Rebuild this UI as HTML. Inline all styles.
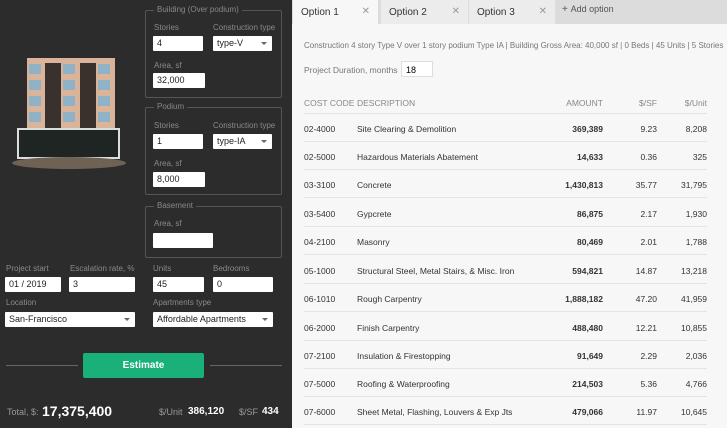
<!DOCTYPE html><html><head><style>
*{box-sizing:border-box;margin:0;padding:0}
body{width:727px;height:428px;overflow:hidden;font-family:"Liberation Sans",sans-serif;position:relative;background:#f7f7f7}
.a{position:absolute}
#L{left:0;top:0;width:292px;height:428px;background:#2c2c2c}
.lb{position:absolute;color:#8a8a8a;font-size:8px}
.in{position:absolute;background:#fff;height:15px;font-size:9px;color:#222;padding:2px 4px;border-radius:1px}
.sel::after{content:"";position:absolute;right:5px;top:6px;border:3px solid transparent;border-top:3px solid #666}
.fs{position:absolute;border:1px solid #555;border-radius:2px}
.fs span{position:absolute;top:-6px;left:8px;background:#2c2c2c;padding:0 3px;color:#888;font-size:8px}
.r{position:absolute;left:304px;width:403px;height:28px;border-bottom:1px solid #e4e4e4;font-size:8.5px;color:#333}
.r div{position:absolute;top:10px}
.c1{left:0}.c2{left:53px}.c3{right:104px;font-weight:bold}.c4{right:50px}.c5{right:0}
.tab{position:absolute;top:0;height:24px;font-size:10px;color:#333;padding:7px 8px;background:#ececec}
.tab i{position:absolute;right:8px;top:6px;font-style:normal;color:#999;font-size:10px}
</style></head><body>
<div class="a" id="L">
<div class="a" style="left:27px;top:58px;width:88px;height:70px;background:#d9b49a"></div>
<div class="a" style="left:45px;top:63px;width:16px;height:65px;background:#3a302c"></div>
<div class="a" style="left:80px;top:63px;width:16px;height:65px;background:#3a302c"></div>
<div class="a" style="left:29px;top:64px;width:12px;height:10px;background:#8fb2c7"></div>
<div class="a" style="left:63px;top:64px;width:12px;height:10px;background:#8fb2c7"></div>
<div class="a" style="left:98px;top:64px;width:12px;height:10px;background:#8fb2c7"></div>
<div class="a" style="left:29px;top:80px;width:12px;height:10px;background:#8fb2c7"></div>
<div class="a" style="left:63px;top:80px;width:12px;height:10px;background:#8fb2c7"></div>
<div class="a" style="left:98px;top:80px;width:12px;height:10px;background:#8fb2c7"></div>
<div class="a" style="left:29px;top:96px;width:12px;height:10px;background:#8fb2c7"></div>
<div class="a" style="left:63px;top:96px;width:12px;height:10px;background:#8fb2c7"></div>
<div class="a" style="left:98px;top:96px;width:12px;height:10px;background:#8fb2c7"></div>
<div class="a" style="left:29px;top:112px;width:12px;height:10px;background:#8fb2c7"></div>
<div class="a" style="left:63px;top:112px;width:12px;height:10px;background:#8fb2c7"></div>
<div class="a" style="left:98px;top:112px;width:12px;height:10px;background:#8fb2c7"></div>
<div class="a" style="left:17px;top:128px;width:103px;height:31px;background:#1e2523;border:2px solid #ddd"></div>
<div class="a" style="left:12px;top:157px;width:114px;height:12px;background:#6e6255;border-radius:50%"></div>
<div class="fs" style="left:145px;top:10px;width:137px;height:88px"><span>Building (Over podium)</span></div>
<div class="lb" style="left:154px;top:23px">Stories</div><div class="lb" style="left:213px;top:23px">Construction type</div>
<div class="in" style="left:153px;top:36px;width:50px">4</div>
<div class="in sel" style="left:213px;top:36px;width:59px">type-V</div>
<div class="lb" style="left:154px;top:61px">Area, sf</div>
<div class="in" style="left:153px;top:73px;width:52px">32,000</div>
<div class="fs" style="left:145px;top:107px;width:137px;height:88px"><span>Podium</span></div>
<div class="lb" style="left:154px;top:121px">Stories</div><div class="lb" style="left:213px;top:121px">Construction type</div>
<div class="in" style="left:153px;top:134px;width:50px">1</div>
<div class="in sel" style="left:213px;top:134px;width:59px">type-IA</div>
<div class="lb" style="left:154px;top:159px">Area, sf</div>
<div class="in" style="left:153px;top:172px;width:52px">8,000</div>
<div class="fs" style="left:145px;top:206px;width:137px;height:52px"><span>Basement</span></div>
<div class="lb" style="left:154px;top:219px">Area, sf</div>
<div class="in" style="left:153px;top:233px;width:60px"></div>
<div class="lb" style="left:6px;top:264px">Project start</div><div class="lb" style="left:70px;top:264px">Escalation rate, %</div>
<div class="lb" style="left:153px;top:264px">Units</div><div class="lb" style="left:213px;top:264px">Bedrooms</div>
<div class="in" style="left:5px;top:277px;width:56px">01 / 2019</div>
<div class="in" style="left:69px;top:277px;width:66px">3</div>
<div class="in" style="left:153px;top:277px;width:51px">45</div>
<div class="in" style="left:213px;top:277px;width:60px">0</div>
<div class="lb" style="left:6px;top:298px">Location</div><div class="lb" style="left:153px;top:298px">Apartments type</div>
<div class="in sel" style="left:5px;top:312px;width:130px">San-Francisco</div>
<div class="in sel" style="left:153px;top:312px;width:120px">Affordable Apartments</div>
<div class="a" style="left:6px;top:365px;width:72px;height:1px;background:#666"></div>
<div class="a" style="left:210px;top:365px;width:72px;height:1px;background:#666"></div>
<div class="a" style="left:83px;top:353px;width:121px;height:25px;background:#1ab07a;border-radius:2px;color:#fff;font-size:10px;font-weight:bold;text-align:center;line-height:25px">Estimate</div>
<div class="a" style="left:7px;top:407px;color:#999;font-size:9px">Total, $:</div>
<div class="a" style="left:42px;top:403px;color:#fff;font-size:14px;font-weight:bold">17,375,400</div>
<div class="a" style="left:159px;top:407px;color:#999;font-size:9px">$/Unit</div>
<div class="a" style="left:188px;top:406px;color:#fff;font-size:10px;font-weight:bold">386,120</div>
<div class="a" style="left:239px;top:407px;color:#999;font-size:9px">$/SF</div>
<div class="a" style="left:262px;top:406px;color:#fff;font-size:10px;font-weight:bold">434</div>
</div>
<div class="a" style="left:292px;top:0;width:435px;height:24px;background:#dcdcdc"></div>
<div class="tab" style="left:293px;width:85px;background:#f7f7f7">Option 1<i>✕</i></div>
<div class="tab" style="left:381px;width:87px">Option 2<i>✕</i></div>
<div class="tab" style="left:469px;width:86px">Option 3<i>✕</i></div>
<div class="a" style="left:562px;top:4px;font-size:10px;color:#555">+ <span style="font-size:9px">Add option</span></div>
<div class="a" style="left:304px;top:41px;font-size:8px;color:#777">Construction 4 story Type V over 1 story podium Type IA | Building Gross Area: 40,000 sf | 0 Beds | 45 Units | 5 Stories</div>
<div class="a" style="left:304px;top:65px;font-size:8.5px;color:#777">Project Duration, months</div>
<div class="a" style="left:401px;top:61px;width:32px;height:16px;background:#fff;border:1px solid #ddd;font-size:9px;padding:3px 4px">18</div>
<div class="r" style="top:91px;color:#888;height:23px"><div class="c1" style="top:7px">COST CODE</div><div class="c2" style="top:7px">DESCRIPTION</div><div class="c3" style="top:7px;font-weight:normal">AMOUNT</div><div class="c4" style="top:7px">$/SF</div><div class="c5" style="top:7px">$/Unit</div></div>
<div class="r" style="top:114px"><div class="c1">02-4000</div><div class="c2">Site Clearing &amp; Demolition</div><div class="c3">369,389</div><div class="c4">9.23</div><div class="c5">8,208</div></div>
<div class="r" style="top:142px"><div class="c1">02-5000</div><div class="c2">Hazardous Materials Abatement</div><div class="c3">14,633</div><div class="c4">0.36</div><div class="c5">325</div></div>
<div class="r" style="top:170px"><div class="c1">03-3100</div><div class="c2">Concrete</div><div class="c3">1,430,813</div><div class="c4">35.77</div><div class="c5">31,795</div></div>
<div class="r" style="top:199px"><div class="c1">03-5400</div><div class="c2">Gypcrete</div><div class="c3">86,875</div><div class="c4">2.17</div><div class="c5">1,930</div></div>
<div class="r" style="top:227px"><div class="c1">04-2100</div><div class="c2">Masonry</div><div class="c3">80,469</div><div class="c4">2.01</div><div class="c5">1,788</div></div>
<div class="r" style="top:256px"><div class="c1">05-1000</div><div class="c2">Structural Steel, Metal Stairs, &amp; Misc. Iron</div><div class="c3">594,821</div><div class="c4">14.87</div><div class="c5">13,218</div></div>
<div class="r" style="top:284px"><div class="c1">06-1010</div><div class="c2">Rough Carpentry</div><div class="c3">1,888,182</div><div class="c4">47.20</div><div class="c5">41,959</div></div>
<div class="r" style="top:313px"><div class="c1">06-2000</div><div class="c2">Finish Carpentry</div><div class="c3">488,480</div><div class="c4">12.21</div><div class="c5">10,855</div></div>
<div class="r" style="top:341px"><div class="c1">07-2100</div><div class="c2">Insulation &amp; Firestopping</div><div class="c3">91,649</div><div class="c4">2.29</div><div class="c5">2,036</div></div>
<div class="r" style="top:369px"><div class="c1">07-5000</div><div class="c2">Roofing &amp; Waterproofing</div><div class="c3">214,503</div><div class="c4">5.36</div><div class="c5">4,766</div></div>
<div class="r" style="top:397px"><div class="c1">07-6000</div><div class="c2">Sheet Metal, Flashing, Louvers &amp; Exp Jts</div><div class="c3">479,066</div><div class="c4">11.97</div><div class="c5">10,645</div></div>
</body></html>
